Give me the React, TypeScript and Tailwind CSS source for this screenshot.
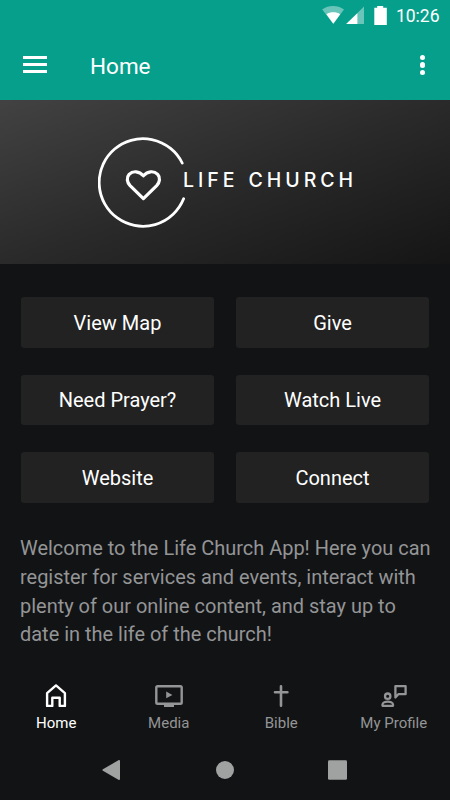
import type { ReactNode } from 'react';

const links = ['View Map', 'Give', 'Need Prayer?', 'Watch Live', 'Website', 'Connect'];

const HomeIcon = () => (
  <svg width="28" height="28" viewBox="0 0 28 28" fill="none" stroke="currentColor" strokeWidth="2.4" strokeLinejoin="round">
    <path d="M5.1 24.9V12.1L14 4.4l8.9 7.7v12.8h-5.2v-8.1h-7.4v8.1z" />
  </svg>
);

const MediaIcon = () => (
  <svg width="28" height="28" viewBox="0 0 28 28" fill="none">
    <rect x="1.3" y="5.2" width="25.4" height="17.6" rx="1.3" stroke="currentColor" strokeWidth="2.4" />
    <path d="M9 23h10v3H9zM11.2 10.5v6.8l6.2-3.4z" fill="currentColor" />
  </svg>
);

const BibleIcon = () => (
  <svg width="28" height="28" viewBox="0 0 28 28" fill="none" stroke="currentColor" strokeWidth="2.6" strokeLinecap="round">
    <path d="M14 5.2v19.6M8 11.3h12.4" />
  </svg>
);

const ProfileIcon = () => (
  <svg width="28" height="28" viewBox="0 0 28 28" fill="none" stroke="currentColor" strokeWidth="2.3" strokeLinejoin="round">
    <circle cx="7.7" cy="15.2" r="2.7" />
    <path d="M2.5 24.8v-1.3c0-2 3.2-2.9 5.3-2.9s5.2.9 5.2 2.9v1.3z" />
    <path d="M15.4 16.5V5.2h10.2v8h-7.3z" />
  </svg>
);

const tabs: { label: string; icon: ReactNode; active?: boolean }[] = [
  { label: 'Home', icon: <HomeIcon />, active: true },
  { label: 'Media', icon: <MediaIcon /> },
  { label: 'Bible', icon: <BibleIcon /> },
  { label: 'My Profile', icon: <ProfileIcon /> },
];

const StatusBar = () => (
  <div className="flex h-8 items-center justify-end pr-[10.5px] text-white">
    <svg width="70" height="32" viewBox="0 0 70 32" fill="#fff">
      {/* Wifi */}
      <path d="M2.2 9.4C8.5 4.9 17.6 4.9 24 9.4L13.3 23.7z" opacity="0.4" />
      <path d="M6.4 14.3c4-2.6 9.8-2.6 13.8 0l-6.9 9.4z" />
      {/* Mobile signal */}
      <path d="M26.2 24 44 6.5V24z" opacity="0.4" />
      <path d="M26.2 24 37.4 13.2V24z" />
      {/* Battery */}
      <path d="M57.2 6h6v1.8h3.6V25H54.3V7.8h2.9z" />
    </svg>
    <span className="ml-[6px] text-[17.5px] leading-8">10:26</span>
  </div>
);

const Header = () => (
  <header className="h-[100px] shrink-0 bg-[#069f8c]">
    <StatusBar />
    <div className="flex h-[66px] items-center pl-[23px] pr-[25px] text-white">
      <button className="-mt-px flex w-6 flex-col gap-[4.2px]" aria-label="Menu">
        <span className="h-[2.8px] w-6 bg-current" />
        <span className="h-[2.8px] w-6 bg-current" />
        <span className="h-[2.8px] w-6 bg-current" />
      </button>
      <h1 className="mt-[3px] ml-[43px] text-[22.5px]">Home</h1>
      <button className="ml-auto flex flex-col gap-[2.3px]" aria-label="More">
        <span className="size-[5.2px] rounded-full bg-current" />
        <span className="size-[5.2px] rounded-full bg-current" />
        <span className="size-[5.2px] rounded-full bg-current" />
      </button>
    </div>
  </header>
);

const Banner = () => (
  <div className="flex h-[164px] shrink-0 items-center bg-[linear-gradient(160deg,#424242_0%,#2a2a2a_50%,#151515_100%)] pl-[97.5px] text-white">
    <svg className="shrink-0" width="87" height="94" viewBox="0 0 87 94" fill="none" stroke="#fff" strokeLinecap="round" strokeLinejoin="round">
      <path d="M84.2 28A43.8 43.8 0 1 0 85.6 63.8" strokeWidth="2.8" />
      <path d="M45.4 63.6 32.1 50.6C29 47.4 28.2 42.6 31.1 39.4C35.1 35.4 41.1 36 45.4 40.8C49.7 36 55.7 35.4 59.7 39.4C62.6 42.6 61.8 47.4 58.7 50.6Z" strokeWidth="3.2" />
    </svg>
    <span className="-mt-[2px] -ml-[1.5px] font-['Inter'] text-[19.5px] font-medium tracking-[3.95px] [word-spacing:1px] whitespace-nowrap">
      LIFE CHURCH
    </span>
  </div>
);

const TabBar = () => (
  <nav className="grid h-[60px] grid-cols-4">
    {tabs.map(({ label, icon, active }) => (
      <button
        key={label}
        className={`flex flex-col items-center text-[15px] leading-[18px] ${active ? 'text-white' : 'text-[#949596]'}`}
      >
        {icon}
        <span className="mt-[5px] whitespace-nowrap">{label}</span>
      </button>
    ))}
  </nav>
);

const SystemNav = () => (
  <div className="flex h-[60px] items-center justify-center">
    <svg width="246" height="22" viewBox="0 0 246 22" fill="#a0a1a1">
      <path d="M16.4 1.3C17.3.8 18 1.1 18 2v18c0 1-.7 1.3-1.6.8L.9 11.8c-.7-.5-.7-1.1 0-1.6z" />
      <circle cx="123" cy="11" r="9" />
      <rect x="226" y="1.2" width="19" height="19.5" rx="1.3" />
    </svg>
  </div>
);

const App = () => {
  return (
    <div className="flex h-[800px] w-[450px] flex-col overflow-hidden bg-[#121315] font-['Roboto',sans-serif]">
      <Header />
      <Banner />
      <main className="h-[406px] shrink-0 pt-[33.4px]">
        <div className="grid grid-cols-2 gap-x-[22px] gap-y-[27px] px-[21px]">
          {links.map((label) => (
            <button key={label} className="h-[50.4px] rounded-[3px] bg-[#222222] pt-px text-[20px] text-white">
              {label}
            </button>
          ))}
        </div>
        <p className="mt-[31.8px] pl-5 text-[19.97px] leading-[28.6px] whitespace-nowrap text-[#949596]">
          Welcome to the Life Church App! Here you can
          <br />
          register for services and events, interact with
          <br />
          plenty of our online content, and stay up to
          <br />
          date in the life of the church!
        </p>
      </main>
      <div className="pt-[10.5px]">
        <TabBar />
      </div>
      <SystemNav />
    </div>
  );
};

export default App;
